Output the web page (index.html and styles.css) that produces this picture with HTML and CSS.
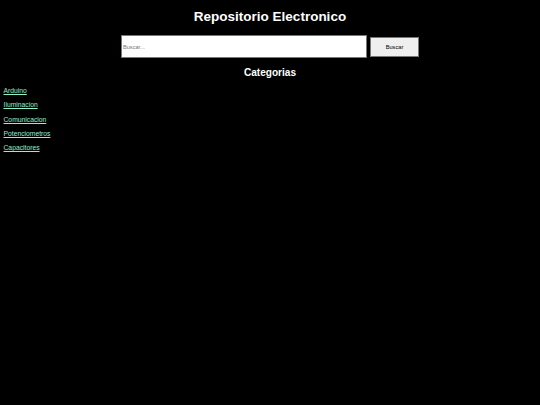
FILE: index.html
```html
<!DOCTYPE html>
<html lang="es">
<head>
<meta charset="utf-8">
<title>Repositorio Electronico</title>
<link rel="stylesheet" href="styles.css">
</head>
<body>
<header class="header">
  <h1 class="title">Repositorio Electronico</h1>
  <form class="search">
    <input class="search-input" type="text" placeholder="Buscar...">
    <button class="search-btn" type="button">Buscar</button>
  </form>
  <h2 class="subtitle">Categorias</h2>
</header>
<nav class="cats">
  <a class="cat" href="#">Arduino</a>
  <a class="cat" href="#">Iluminacion</a>
  <a class="cat" href="#">Comunicacion</a>
  <a class="cat" href="#">Potenciometros</a>
  <a class="cat" href="#">Capacitores</a>
</nav>
</body>
</html>
```
FILE: styles.css
```css
html, body {
  margin: 0;
  padding: 0;
  background: #000;
}
body {
  font-family: "Liberation Sans", Arial, sans-serif;
  color: #fff;
  padding: 0 3.5px;
}
.header {
  display: flex;
  flex-direction: column;
  align-items: center;
}
.title {
  margin: 9px 0 0;
  font-size: 13.5px;
  line-height: 16px;
  font-weight: bold;
}
.search {
  display: flex;
  align-items: center;
  gap: 2px;
  margin-top: 10px;
}
.search-input {
  box-sizing: border-box;
  width: 246px;
  height: 23px;
  margin: 0;
  padding: 0 1px;
  border: 1px solid #777;
  background: #fff;
  font-family: "Liberation Sans", Arial, sans-serif;
  font-size: 5.6px;
  color: #000;
  outline: none;
}
.search-input::placeholder {
  color: #777;
}
.search-btn {
  box-sizing: border-box;
  width: 49px;
  height: 20px;
  margin: 0 0 0 1px;
  padding: 0;
  border: 1px solid #777;
  background: #efefef;
  font-family: "Liberation Sans", Arial, sans-serif;
  font-size: 5.7px;
  color: #000;
}
.subtitle {
  margin: 9px 0 0;
  font-size: 10.1px;
  line-height: 12px;
  font-weight: bold;
}
.cats {
  display: flex;
  flex-direction: column;
  align-items: flex-start;
  gap: 6.3px;
  margin-top: 8px;
}
.cat {
  font-size: 6.75px;
  line-height: 8px;
  color: #8ef0cc;
  text-decoration: underline;
}
```
